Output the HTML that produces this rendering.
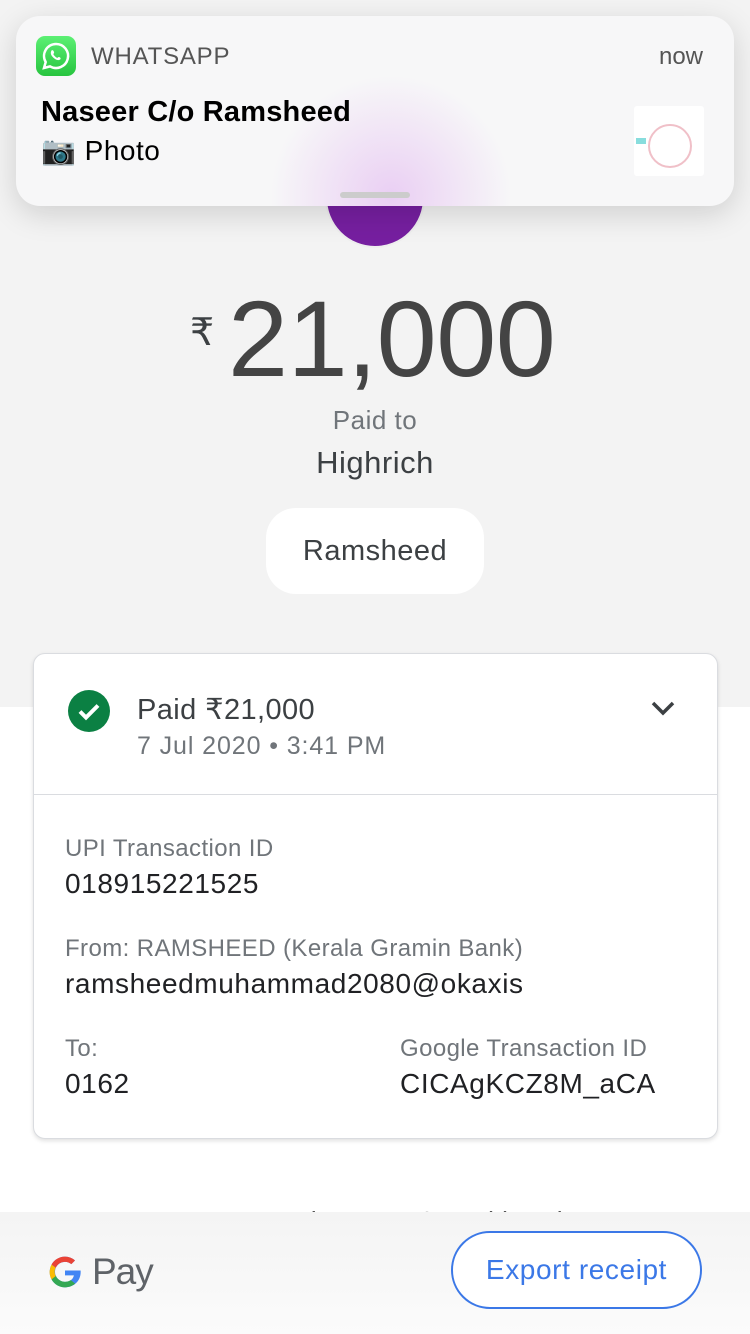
<!DOCTYPE html>
<html><head><meta charset="utf-8"><style>
*{margin:0;padding:0;box-sizing:border-box}
body{width:750px;height:1334px;overflow:hidden;position:relative;background:#fff;font-family:"Liberation Sans",sans-serif;color:#3c4043}
.top{position:absolute;left:0;top:0;width:750px;height:707px;background:#f3f3f3}
.abs{position:absolute}
.lab{font-size:24px;color:#70757a;letter-spacing:.4px}
.val{font-size:28px;color:#202124;letter-spacing:.6px}
</style></head><body>
<div class="top"></div>
<div class="abs" style="left:325px;top:148px;width:100px;height:100px;border-radius:50%;background:#761fa0;border:2px solid #eee"></div>
<div class="abs" style="left:190px;top:310px;font-size:38px;color:#3c4043">₹</div>
<div class="abs" style="left:228px;top:276px;font-size:108px;color:#444;letter-spacing:-0.5px">21,000</div>
<div class="abs" style="left:0;width:750px;text-align:center;top:405px;font-size:26px;color:#70757a;letter-spacing:.5px">Paid to</div>
<div class="abs" style="left:0;width:750px;text-align:center;top:445px;font-size:31px;color:#3c4043;letter-spacing:.5px">Highrich</div>
<div class="abs" style="left:266px;top:508px;width:218px;height:86px;border-radius:30px;background:#fff;text-align:center;line-height:86px;font-size:29px;letter-spacing:.5px">Ramsheed</div>

<div class="abs" style="left:33px;top:653px;width:685px;height:486px;border:1px solid #dadce0;border-radius:12px;background:#fff;box-shadow:0 2px 4px rgba(0,0,0,.12)">
 <div class="abs" style="left:34px;top:36px;width:42px;height:42px;border-radius:50%;background:#0b8043"></div>
 <svg class="abs" style="left:34px;top:36px" width="42" height="42"><path d="M12 21.5l6 6 12-12" stroke="#fff" stroke-width="4" fill="none"/></svg>
 <div class="abs" style="left:103px;top:38px;font-size:29px;color:#3c4043;letter-spacing:.4px">Paid ₹21,000</div>
 <div class="abs" style="left:103px;top:78px;font-size:25px;color:#70757a;letter-spacing:.9px">7 Jul 2020 • 3:41 PM</div>
 <svg class="abs" style="left:615px;top:44px" width="28" height="20"><path d="M4 5l10 10 10-10" stroke="#3c4043" stroke-width="3.5" fill="none"/></svg>
 <div class="abs" style="left:0;top:140px;width:683px;height:1px;background:#dadce0"></div>
 <div class="abs lab" style="left:31px;top:181px">UPI Transaction ID</div>
 <div class="abs val" style="left:31px;top:214px">018915221525</div>
 <div class="abs lab" style="left:31px;top:281px">From: RAMSHEED (Kerala Gramin Bank)</div>
 <div class="abs val" style="left:31px;top:314px">ramsheedmuhammad2080@okaxis</div>
 <div class="abs lab" style="left:31px;top:381px">To:</div>
 <div class="abs val" style="left:31px;top:414px">0162</div>
 <div class="abs lab" style="left:366px;top:381px">Google Transaction ID</div>
 <div class="abs val" style="left:366px;top:414px">CICAgKCZ8M_aCA</div>
</div>

<div class="abs" style="left:95px;top:1196px;width:560px;height:16px;overflow:hidden;font-size:26px;color:#555;line-height:50px;letter-spacing:1px">Payments may take up to 3 working days to be</div>
<div class="abs" style="left:0;top:1212px;width:750px;height:122px;background:linear-gradient(#f4f4f4,#fbfbfb)"></div>
<svg class="abs" style="left:45px;top:1252px" width="40" height="40" viewBox="0 0 24 24"><path d="M21.35 11.1H12v2.9h5.35c-.5 2.4-2.6 3.9-5.35 3.9a6 6 0 010-12c1.5 0 2.8.5 3.8 1.4l2.2-2.2A9.2 9.2 0 0012 2.8a9.2 9.2 0 100 18.4c5 0 9.4-3.6 9.4-9.2 0-.3 0-.6-.05-.9z" fill="#4285f4"/><path d="M3.9 7.6l2.5 1.8A6 6 0 0112 5.9c1.5 0 2.8.5 3.8 1.4l2.2-2.2A9.2 9.2 0 0012 2.8 9.2 9.2 0 003.9 7.6z" fill="#ea4335"/><path d="M3.9 16.4A9.2 9.2 0 0012 21.2c2.4 0 4.5-.8 6.1-2.2l-2.6-2.1c-.9.6-2.1 1-3.5 1a6 6 0 01-5.6-3.9z" fill="#34a853"/><path d="M3.9 7.6a9.2 9.2 0 000 8.8l2.5-1.9a6 6 0 010-5.1z" fill="#fbbc04"/></svg>
<div class="abs" style="left:92px;top:1251px;font-size:37px;color:#5f6368;letter-spacing:-1px">Pay</div>
<div class="abs" style="left:451px;top:1231px;width:251px;height:78px;border:2px solid #3b78e7;border-radius:40px;background:#fff;text-align:center;line-height:74px;font-size:28px;color:#3b78e7;letter-spacing:.6px">Export receipt</div>

<div class="abs" style="left:16px;top:16px;width:718px;height:190px;border-radius:24px;background:radial-gradient(circle at 375px 180px,rgba(225,180,240,.6),rgba(247,247,248,0) 120px),#f7f7f8;box-shadow:0 8px 30px rgba(0,0,0,.15)">
 <div class="abs" style="left:20px;top:20px;width:40px;height:40px;border-radius:9px;background:linear-gradient(#5cf074,#27c43f)"></div>
 <svg class="abs" style="left:24px;top:24px" width="32" height="32" viewBox="0 0 32 32"><path d="M16 4a12 12 0 00-10.3 18.1L4 28l6.1-1.6A12 12 0 1016 4z" fill="none" stroke="#fff" stroke-width="2.5"/><path d="M11.5 10.5c1-1 2 0 2.5 1.5s-1 1.5-.5 2.5 2.5 3 3.5 3.3 1-1 2-.8 2 1 1.5 2-2 1.5-4 .7-5-3.5-5.5-5.5.2-3 .5-3.7z" fill="#fff"/></svg>
 <div class="abs" style="left:75px;top:27px;font-size:24px;color:#555;letter-spacing:.8px">WHATSAPP</div>
 <div class="abs" style="right:31px;top:27px;font-size:24px;color:#555">now</div>
 <div class="abs" style="left:25px;top:80px;font-size:29px;font-weight:bold;color:#000;letter-spacing:.2px">Naseer C/o Ramsheed</div>
 <div class="abs" style="left:25px;top:118px;font-size:28px;color:#000;letter-spacing:.5px">📷 Photo</div>
 <div class="abs" style="left:618px;top:90px;width:70px;height:70px;background:#fff;border-radius:3px"><div style="position:absolute;left:14px;top:18px;width:44px;height:44px;border:2px solid #f0c0c8;border-radius:50%"></div><div style="position:absolute;left:2px;top:32px;width:10px;height:6px;background:#8dd"></div></div>
 <div class="abs" style="left:324px;top:176px;width:70px;height:6px;border-radius:3px;background:#ccc"></div>
</div>
</body></html>
